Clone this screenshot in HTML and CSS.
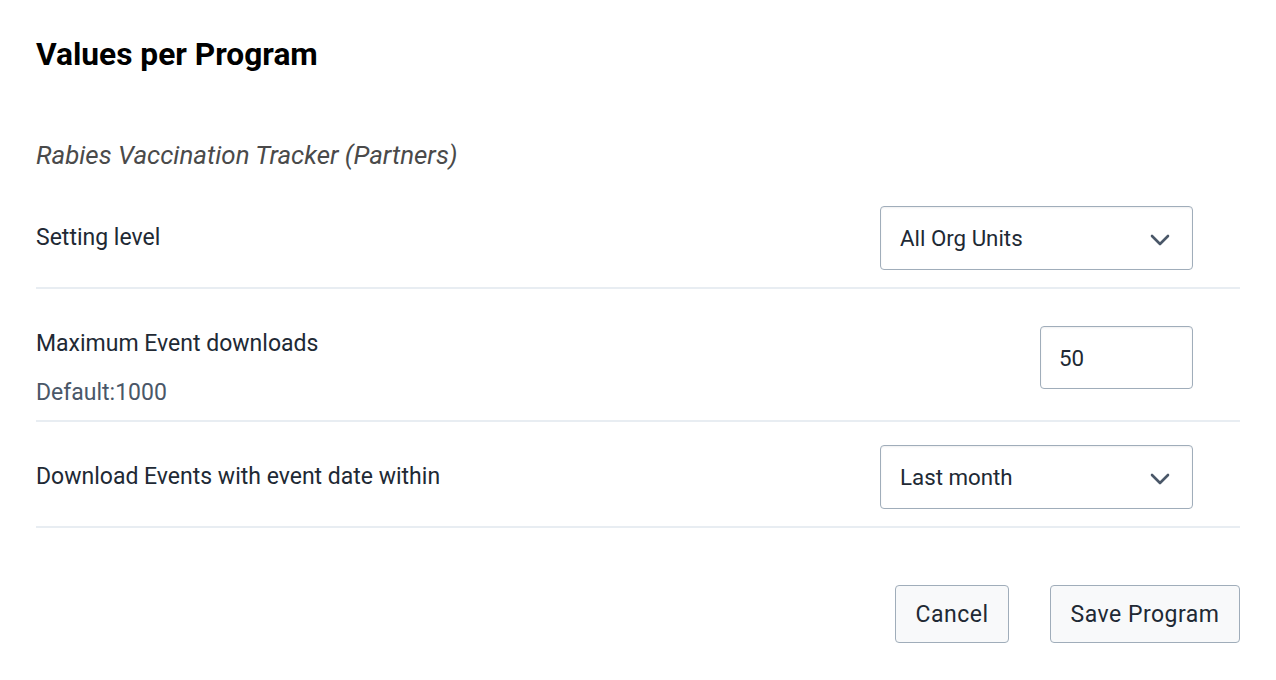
FILE: index.html
```html
<!DOCTYPE html>
<html>
<head>
<meta charset="utf-8">
<link rel="stylesheet" href="styles.css">
</head>
<body>
<div class="page">
  <h1 class="title">Values per Program</h1>
  <div class="subtitle">Rabies Vaccination Tracker (Partners)</div>

  <div class="row row-1">
    <div class="label">Setting level</div>
    <div class="select">
      <span>All Org Units</span>
      <svg class="chev" width="20" height="12" viewBox="0 0 20 12"><path d="M2 2 L10 10 L18 2" fill="none" stroke="#4a5768" stroke-width="2.6" stroke-linecap="round" stroke-linejoin="round"/></svg>
    </div>
  </div>

  <div class="row row-2">
    <div class="label-col">
      <div class="label">Maximum Event downloads</div>
      <div class="help">Default:1000</div>
    </div>
    <div class="input">50</div>
  </div>

  <div class="row row-3">
    <div class="label">Download Events with event date within</div>
    <div class="select">
      <span>Last month</span>
      <svg class="chev" width="20" height="12" viewBox="0 0 20 12"><path d="M2 2 L10 10 L18 2" fill="none" stroke="#4a5768" stroke-width="2.6" stroke-linecap="round" stroke-linejoin="round"/></svg>
    </div>
  </div>

  <div class="actions">
    <button class="btn btn-cancel">Cancel</button>
    <button class="btn btn-save">Save Program</button>
  </div>
</div>
</body>
</html>
```

FILE: styles.css
```css
html, body {
  margin: 0;
  padding: 0;
  background: #ffffff;
}
body {
  font-family: Roboto, "Liberation Sans", sans-serif;
  color: #212934;
}
.page {
  width: 1204px;
  padding: 0 36px;
}
.title {
  margin: 0;
  padding-top: 36px;
  font-size: 31.7px;
  line-height: 38px;
  font-weight: 700;
  color: #000000;
}
.subtitle {
  margin-top: 66px;
  font-size: 25.9px;
  line-height: 30px;
  font-style: italic;
  color: #4a4a4a;
  height: 49px;
}
.row {
  display: flex;
  justify-content: space-between;
  border-bottom: 2px solid #e8edf2;
  padding-right: 47px;
}
.row-1 {
  align-items: center;
  padding-top: 17px;
  padding-bottom: 17px;
}
.row-2 {
  align-items: flex-start;
  padding-top: 37px;
  padding-bottom: 15px;
}
.row-3 {
  align-items: center;
  padding-top: 23px;
  padding-bottom: 17px;
}
.label {
  font-size: 23px;
  line-height: 24px;
}
.label-col {
  margin-top: 6px;
}
.help {
  margin-top: 25px;
  font-size: 23px;
  line-height: 24px;
  color: #4a5768;
}
.select {
  box-sizing: border-box;
  width: 313px;
  height: 64px;
  border: 1px solid #a0adba;
  border-radius: 4px;
  display: flex;
  align-items: center;
  justify-content: space-between;
  padding: 0 22px 0 19px;
  font-size: 22.3px;
  box-shadow: inset 0 1px 2px rgba(48, 54, 60, 0.08);
}
.chev {
  display: block;
  margin-top: 3px;
}
.input {
  box-sizing: border-box;
  width: 153px;
  height: 63px;
  border: 1px solid #a0adba;
  border-radius: 4px;
  display: flex;
  align-items: center;
  padding-left: 18px;
  font-size: 22.3px;
  box-shadow: inset 0 1px 2px rgba(48, 54, 60, 0.08);
}
.actions {
  display: flex;
  justify-content: flex-end;
  gap: 41px;
  margin-top: 57px;
}
.btn {
  box-sizing: border-box;
  height: 58px;
  border: 1px solid #a0adba;
  border-radius: 4px;
  background: #f8f9fa;
  font-family: Roboto, "Liberation Sans", sans-serif;
  font-size: 23px;
  color: #212934;
  padding: 0 10px;
  letter-spacing: 0.5px;
}
.btn-cancel {
  width: 114px;
}
.btn-save {
  width: 190px;
}
```
